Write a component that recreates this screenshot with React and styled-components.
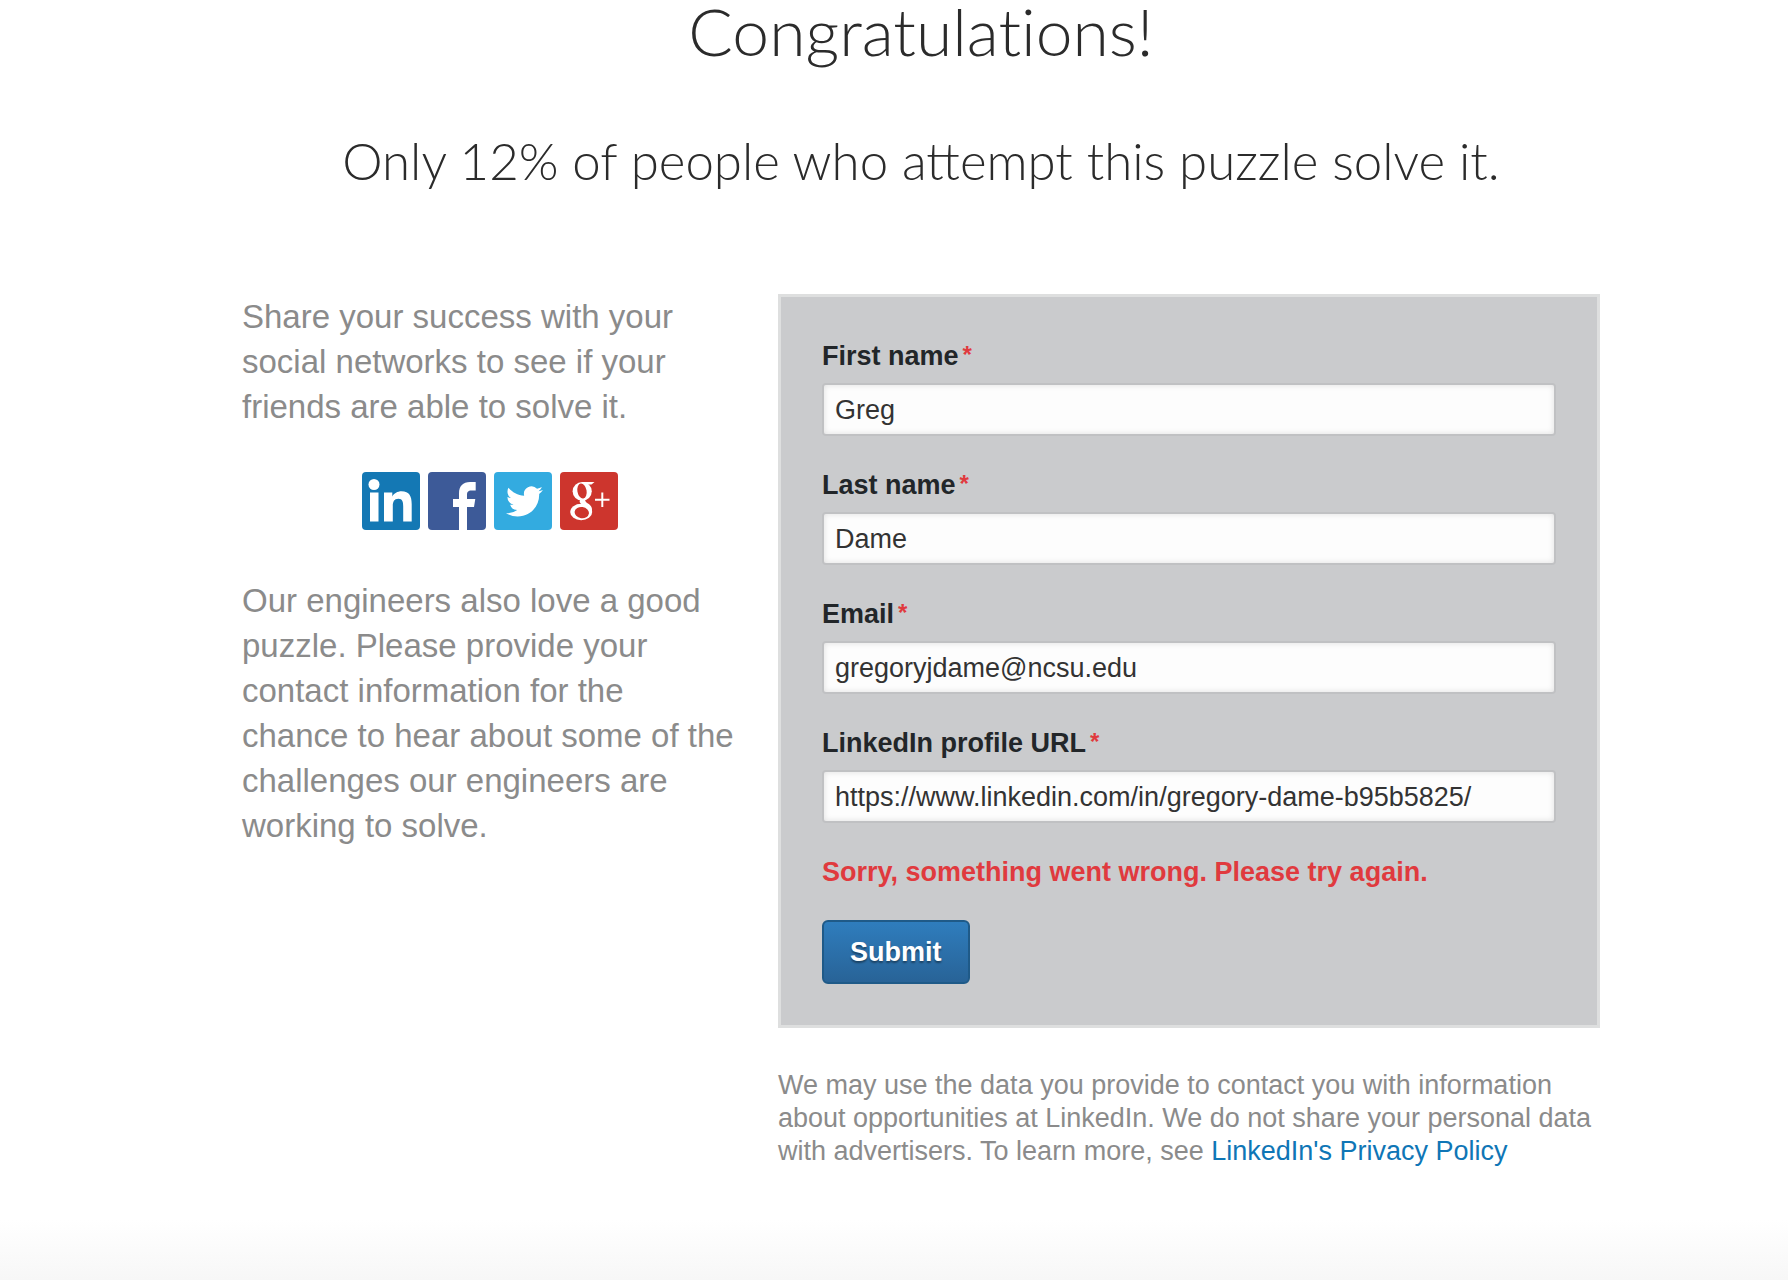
import React from "react";
import styled, { createGlobalStyle } from "styled-components";

const GlobalStyle = createGlobalStyle`
  *, *::before, *::after { box-sizing: border-box; }
  body {
    margin: 0;
    background: #fff;
    color: #333;
    font-family: "Liberation Sans", Arial, Helvetica, sans-serif;
  }
`;

const Page = styled.div`
  display: flex;
  flex-direction: column;
  min-height: 100vh;
`;

const Main = styled.main`
  flex: 1;
  width: 100%;
  max-width: 1412px;
  margin: 0 auto;
  padding-left: 54px;
`;

const Header = styled.header`
  text-align: center;
  color: #2b2b2b;
  font-family: Lato, "Open Sans", sans-serif;
  font-weight: 300;
`;

const Title = styled.h1`
  margin: 0;
  font-size: 66px;
  line-height: 62px;
  font-weight: 300;
  font-variant-ligatures: none;
`;

const Subtitle = styled.h2`
  margin: 59px 0 0;
  font-size: 51px;
  line-height: 80px;
  font-weight: 300;
`;

const Columns = styled.div`
  display: grid;
  grid-template-columns: minmax(0, 496fr) minmax(0, 822fr);
  column-gap: 40px;
  margin-top: 93px;
`;

const Copy = styled.p`
  margin: 0;
  color: #8b8b8b;
  font-size: 33px;
  line-height: 45px;
`;

const Shares = styled.nav`
  display: flex;
  justify-content: center;
  gap: 8px;
  margin: 43px 0 48px;
`;

const ShareLink = styled.a`
  display: block;
  width: 58px;
  height: 58px;
  border-radius: 4px;
  overflow: hidden;
  background: ${(p) => p.$color};

  svg { display: block; }
`;

const Form = styled.form`
  padding: 42px 41px 41px;
  border: 3px solid #dedfdf;
  background: #cacbcd;
`;

const Field = styled.div`
  margin-bottom: 32px;
`;

const Label = styled.label`
  display: flex;
  gap: 4px;
  margin-bottom: 9px;
  color: #222629;
  font-size: 27px;
  line-height: 35px;
  font-weight: 700;
`;

const Required = styled.span`
  color: #e03a3e;
  font-size: 24px;
  line-height: 32px;
`;

const Input = styled.input`
  display: block;
  width: 100%;
  height: 53px;
  padding: 2px 11px 0;
  border: 2px solid #c0c1c3;
  border-radius: 4px;
  background: #fdfdfd;
  box-shadow: inset 0 0 6px rgba(0, 0, 0, 0.12);
  color: #333;
  font: 400 27px "Liberation Sans", Arial, sans-serif;
`;

const ErrorText = styled.p`
  margin: 0;
  color: #e03a3e;
  font-size: 27px;
  line-height: 35px;
  font-weight: 700;
`;

const Submit = styled.button`
  display: block;
  height: 64px;
  margin-top: 30px;
  padding: 0 26px;
  border: 2px solid #1f5a88;
  border-radius: 6px;
  background: linear-gradient(#2f7dbd, #286397);
  color: #fff;
  font: 700 27px "Liberation Sans", Arial, sans-serif;
  text-shadow: 0 2px 2px rgba(0, 0, 0, 0.4);
`;

const Notice = styled.p`
  margin: 41px 0 0;
  color: #8b8b8b;
  font-size: 27px;
  line-height: 33px;
`;

const PolicyLink = styled.a`
  color: #0f76b6;
  text-decoration: none;
`;

const Fade = styled.footer`
  height: 60px;
  background: linear-gradient(#fff, #f7f7f7);
`;

const networks = [
  {
    name: "LinkedIn",
    color: "#1478b4",
    icon: (
      <g fill="#fff">
        <circle cx="12" cy="12.5" r="5.5" />
        <path d="M8 20.5H16.5V49.5H8Z" />
        <path d="M22 20.5H30.3V24.5C32 21.5 35.5 19.3 39.5 19.3C47.5 19.3 49.7 24.5 49.7 32V49.5H41.2V34.5C41.2 30 40.5 26.8 36.5 26.8C32 26.8 30.8 30 30.8 34V49.5H22Z" />
      </g>
    ),
  },
  {
    name: "Facebook",
    color: "#3d5a98",
    icon: (
      <path
        fill="#fff"
        d="M31 58V35H25V27H31V21.5C31 14 35 10 42 10H47.7V18.5H43.5C40 18.5 39 20 39 23V27H47.3L46 35H39V58Z"
      />
    ),
  },
  {
    name: "Twitter",
    color: "#33abe0",
    icon: (
      <path
        fill="#fff"
        transform="translate(12 11) scale(1.54)"
        d="M23.95 4.57a10 10 0 0 1-2.82.77 4.96 4.96 0 0 0 2.16-2.72c-.95.55-2 .96-3.13 1.18a4.92 4.92 0 0 0-8.38 4.48C7.69 8.1 4.07 6.13 1.64 3.16a4.92 4.92 0 0 0 1.52 6.57 4.9 4.9 0 0 1-2.23-.61v.06a4.92 4.92 0 0 0 3.95 4.83 5 5 0 0 1-2.21.08 4.94 4.94 0 0 0 4.6 3.42A9.87 9.87 0 0 1 0 19.54a13.99 13.99 0 0 0 7.55 2.21c9.05 0 14-7.5 14-13.98 0-.21 0-.42-.02-.63a9.94 9.94 0 0 0 2.46-2.55z"
      />
    ),
  },
  {
    name: "Google+",
    color: "#cd352d",
    icon: (
      <g>
        <g fill="#fff">
          <path d="M22 10H34.5L31.5 12.5H22Z" />
          <ellipse cx="22.2" cy="19.3" rx="9.6" ry="9.3" />
          <path d="M20.5 27.5L26 26C24.5 28.5 25 29.5 28 31.5C32 34 33 37 31 41L24 34C20 31 18.5 30 20.5 27.5Z" />
          <ellipse cx="21.2" cy="40" rx="11" ry="8.2" />
        </g>
        <g fill="#cd352d">
          <ellipse cx="22" cy="19" rx="4.6" ry="7.6" transform="rotate(-10 22 19)" />
          <ellipse cx="21.8" cy="40.6" rx="7.2" ry="5.6" transform="rotate(8 21.8 40.6)" />
        </g>
        <path fill="none" stroke="#fff" strokeWidth="2" d="M35 27.8H49.5M42.3 20.5V35" />
      </g>
    ),
  },
];

const fields = [
  { id: "first-name", label: "First name", type: "text", value: "Greg" },
  { id: "last-name", label: "Last name", type: "text", value: "Dame" },
  { id: "email", label: "Email", type: "email", value: "gregoryjdame@ncsu.edu" },
  {
    id: "profile-url",
    label: "LinkedIn profile URL",
    type: "url",
    value: "https://www.linkedin.com/in/gregory-dame-b95b5825/",
  },
];

export default function App() {
  return (
    <Page>
      <GlobalStyle />
      <Main>
        <Header>
          <Title>Congratulations!</Title>
          <Subtitle>Only 12% of people who attempt this puzzle solve it.</Subtitle>
        </Header>
        <Columns>
          <section>
            <Copy>
              Share your success with your social networks to see if your friends are able to
              solve it.
            </Copy>
            <Shares aria-label="Share">
              {networks.map((n) => (
                <ShareLink key={n.name} href="#" aria-label={n.name} $color={n.color}>
                  <svg width="58" height="58" viewBox="0 0 58 58" aria-hidden="true">
                    {n.icon}
                  </svg>
                </ShareLink>
              ))}
            </Shares>
            <Copy>
              Our engineers also love a good puzzle. Please provide your contact information for
              the chance to hear about some of the challenges our engineers are working to solve.
            </Copy>
          </section>
          <section>
            <Form onSubmit={(e) => e.preventDefault()}>
              {fields.map((f) => (
                <Field key={f.id}>
                  <Label htmlFor={f.id}>
                    {f.label}
                    <Required>*</Required>
                  </Label>
                  <Input id={f.id} type={f.type} defaultValue={f.value} />
                </Field>
              ))}
              <ErrorText role="alert">Sorry, something went wrong. Please try again.</ErrorText>
              <Submit type="submit">Submit</Submit>
            </Form>
            <Notice>
              We may use the data you provide to contact you with information about opportunities
              at LinkedIn. We do not share your personal data with advertisers. To learn more, see{" "}
              <PolicyLink href="#">LinkedIn's Privacy Policy</PolicyLink>
            </Notice>
          </section>
        </Columns>
      </Main>
      <Fade />
    </Page>
  );
}
